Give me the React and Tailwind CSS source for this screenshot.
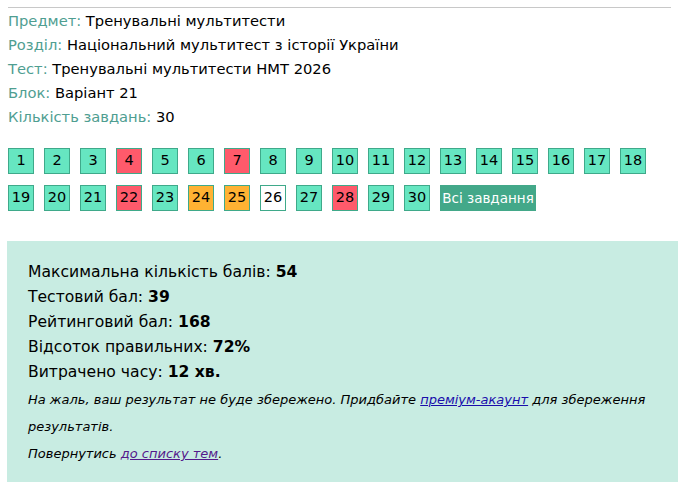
const statuses = {
  4: 'wrong', 7: 'wrong', 22: 'wrong', 28: 'wrong',
  24: 'partial', 25: 'partial',
  26: 'empty',
}

const tone = {
  ok: 'bg-[#66e6c1]',
  wrong: 'bg-[#ff5a6b]',
  partial: 'bg-[#ffb233]',
  empty: 'bg-white',
}

function Cell({ n }) {
  const s = statuses[n] || 'ok'
  return (
    <span className={`flex h-[26px] w-[26px] items-center justify-center border border-[#3fa98a] text-[14.5px] text-black ${tone[s]}`}>
      {n}
    </span>
  )
}

function Meta({ label, value }) {
  return (
    <div className="h-6 leading-6">
      <span className="text-[#4f9e91]">{label}:</span> {value}
    </div>
  )
}

export default function App() {
  const row1 = Array.from({ length: 18 }, (_, i) => i + 1)
  const row2 = Array.from({ length: 12 }, (_, i) => i + 19)

  return (
    <div className="min-h-[491px] bg-white px-2 pt-[7px] font-['DejaVu_Sans',sans-serif] text-[14.7px] text-black">
      <div className="w-[663px] border-t border-[#c8c8c8]" />
      <div className="pt-[1px]">
        <Meta label="Предмет" value="Тренувальні мультитести" />
        <Meta label="Розділ" value="Національний мультитест з історії України" />
        <Meta label="Тест" value="Тренувальні мультитести НМТ 2026" />
        <Meta label="Блок" value="Варіант 21" />
        <Meta label="Кількість завдань" value="30" />
      </div>

      <div className="mt-[19px] flex gap-[10px]">
        {row1.map((n) => <Cell key={n} n={n} />)}
      </div>
      <div className="mt-[11px] flex gap-[10px]">
        {row2.map((n) => <Cell key={n} n={n} />)}
        <span className="flex h-[26px] w-[96px] items-center justify-center bg-[#43a889] text-[13.5px] text-white">
          Всі завдання
        </span>
      </div>

      <div className="-ml-[1px] mt-[30px] h-[241px] w-[671px] bg-[#c8ece2] pl-[21px] pt-[19px]">
        <div className="text-[15.6px] leading-[25px]">
          <div>Максимальна кількість балів: <b>54</b></div>
          <div>Тестовий бал: <b>39</b></div>
          <div>Рейтинговий бал: <b>168</b></div>
          <div>Відсоток правильних: <b>72%</b></div>
          <div>Витрачено часу: <b>12 хв.</b></div>
        </div>
        <p className="mt-[1px] text-[13px] italic leading-[27px]">
          На жаль, ваш результат не буде збережено. Придбайте{' '}
          <a className="text-[#1a0dab] underline" href="#">преміум-акаунт</a> для збереження результатів.
        </p>
        <p className="text-[13px] italic leading-[27px]">
          Повернутись <a className="text-[#551a8b] underline" href="#">до списку тем</a>.
        </p>
      </div>
    </div>
  )
}
